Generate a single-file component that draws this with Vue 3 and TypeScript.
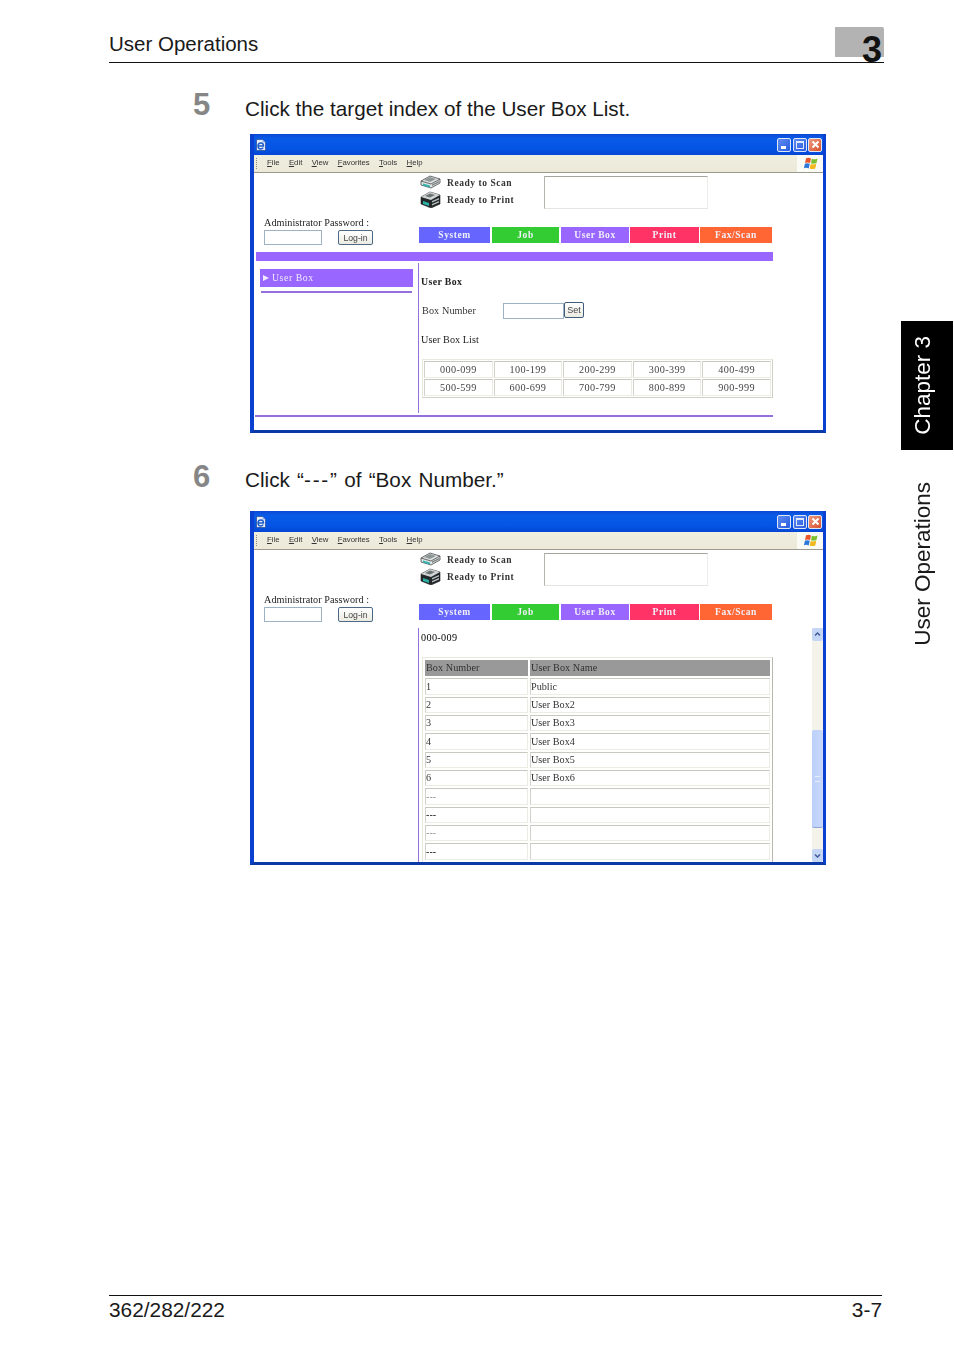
<script setup lang="ts">
interface Step {
  no: string
  kind: 'list' | 'boxes'
}
const steps: Step[] = [
  { no: '5', kind: 'list' },
  { no: '6', kind: 'boxes' },
]
const menu = [
  { key: 'F', rest: 'ile' },
  { key: 'E', rest: 'dit' },
  { key: 'V', rest: 'iew' },
  { key: 'F', rest: 'avorites' },
  { key: 'T', rest: 'ools' },
  { key: 'H', rest: 'elp' },
]
const tabs = [
  { label: 'System', cls: 't-system' },
  { label: 'Job', cls: 't-job' },
  { label: 'User Box', cls: 't-box' },
  { label: 'Print', cls: 't-print' },
  { label: 'Fax/Scan', cls: 't-fax' },
]
const ranges = [
  ['000-099', '100-199', '200-299', '300-399', '400-499'],
  ['500-599', '600-699', '700-799', '800-899', '900-999'],
]
const boxes = [
  ['1', 'Public'],
  ['2', 'User Box2'],
  ['3', 'User Box3'],
  ['4', 'User Box4'],
  ['5', 'User Box5'],
  ['6', 'User Box6'],
  ['---', ''],
  ['---', ''],
  ['---', ''],
  ['---', ''],
]
</script>

<template>
  <div class="page">
    <header class="head">
      <span>User Operations</span>
      <div class="chap"><span class="chap-no">3</span></div>
    </header>

    <section v-for="s in steps" :key="s.no" class="step" :class="'step-' + s.kind">
      <div class="step-row">
        <span class="step-no">{{ s.no }}</span>
        <span v-if="s.kind === 'list'" class="step-text">Click the target index of the User Box List.</span>
        <span v-else class="step-text spaced">Click “<span class="dashes">---</span>” of “Box Number.”</span>
      </div>
      <div class="win" :class="'win-' + s.kind">
        <div class="title">
          <svg class="ie" viewBox="0 0 11 12" width="11" height="12">
            <path d="M1.500 .5h6l3 3v8h-9z" fill="#e6eefb" stroke="#16357e" stroke-width=".6" />
            <path d="M7.500 .5v3h3z" fill="#9db7e6" />
            <path d="M3 7h5.500c0-2-1-3-2.500-3S3 5.200 3 7s1.200 3 2.800 3c1 0 1.900-.5 2.400-1.300" fill="none" stroke="#1a5cc8" stroke-width="1.400" />
          </svg>
          <div class="ctl">
            <span class="btn"><i class="min"></i></span>
            <span class="btn"><i class="max"></i></span>
            <span class="btn close">
              <svg viewBox="0 0 13 13" width="13" height="13"><path d="M3.500 3.500l6 6M9.500 3.500l-6 6" stroke="#fff" stroke-width="2" /></svg>
            </span>
          </div>
        </div>
        <div class="menubar">
          <i class="grip"></i>
          <div class="menu">
            <span v-for="(m, i) in menu" :key="i" class="mi"><u>{{ m.key }}</u>{{ m.rest }}</span>
          </div>
          <div class="flag">
            <svg viewBox="0 0 14 13" width="14" height="13">
              <path d="M2 1.500C3.500 .6 5 .6 7 1.500L6 6C4.200 5.200 2.700 5.200 1 6z" fill="#e8552a" />
              <path d="M7.800 1.800C9.500 2.500 11 2.400 13.500 1.400L12.500 6C10.500 6.900 8.700 7 7 6.300z" fill="#7cc030" />
              <path d="M.9 6.800C2.500 6 3.900 6 5.800 6.800L4.700 11.400C3 10.600 1.500 10.600-.1 11.400z" fill="#2b78d8" />
              <path d="M6.800 7.100C8.500 7.800 10.300 7.700 12.300 6.800L11.300 11.400C9.300 12.300 7.500 12.300 5.700 11.600z" fill="#f2b81e" />
            </svg>
          </div>
        </div>

        <div class="body">
          <div class="top">
            <div class="admin">
              <div class="admin-label">Administrator Password :</div>
              <div class="admin-row">
                <span class="field f-pass"></span>
                <span class="push p-login">Log-in</span>
              </div>
            </div>
            <div class="top-right">
              <div class="status-row">
                <div class="status">
                  <div class="st">
                    <svg class="dev" viewBox="0 0 21 15" width="21" height="15">
                      <path d="M1 6l9-5 10 3v4l-9 5-10-3z" fill="#dfe3e3" stroke="#333" stroke-width=".7" />
                      <path d="M1 6l10 3 9-5" fill="none" stroke="#333" stroke-width=".7" />
                      <path d="M4 5l6-3 6 2-6 3z" fill="#8f9696" />
                      <path d="M3 8.500l7 2v2l-7-2z" fill="#2fb4ae" />
                      <path d="M12 9.500l7-3.500v1.500l-7 3.500z" fill="#7b8282" />
                    </svg>
                    <span>Ready to Scan</span>
                  </div>
                  <div class="st">
                    <svg class="dev" viewBox="0 0 21 17" width="21" height="17">
                      <path d="M1 6l9-5 10 3v9l-9 4-10-4z" fill="#23282a" stroke="#222" stroke-width=".6" />
                      <path d="M1 6l10 3 9-5-10-3z" fill="#d0d4d4" />
                      <path d="M5 5l5-2.500 5 1.500-5 2.500z" fill="#6c7373" />
                      <path d="M3 10l6 2v3l-6-2z" fill="#2bb0a6" />
                      <path d="M12 10l7-3v1.500l-7 3zM12 13l7-3v1.500l-7 3z" fill="#b8bebe" />
                    </svg>
                    <span>Ready to Print</span>
                  </div>
                </div>
                <div class="msgbox"></div>
              </div>
              <nav class="tabs">
                <span v-for="t in tabs" :key="t.label" class="tab" :class="t.cls">{{ t.label }}</span>
              </nav>
            </div>
          </div>

          <template v-if="s.kind === 'list'">
            <div class="bar"></div>
            <div class="main">
              <aside class="side">
                <div class="sel"><i class="tri"></i>User Box</div>
                <div class="sel-line"></div>
              </aside>
              <div class="pane">
                <div class="pane-title">User Box</div>
                <div class="num-row">
                  <span class="num-label">Box Number</span>
                  <span class="field f-num"></span>
                  <span class="push p-set">Set</span>
                </div>
                <div class="list-title">User Box List</div>
                <table class="grid grid-ranges">
                  <tbody>
                    <tr v-for="(r, i) in ranges" :key="i">
                      <td v-for="c in r" :key="c">{{ c }}</td>
                    </tr>
                  </tbody>
                </table>
              </div>
            </div>
            <div class="foot-line"></div>
          </template>

          <div v-else class="main main-boxes">
            <aside class="side"></aside>
            <div class="pane pane-boxes">
              <div class="range-title">000-009</div>
              <table class="grid grid-boxes">
                <thead>
                  <tr><th class="c1">Box Number</th><th class="c2">User Box Name</th></tr>
                </thead>
                <tbody>
                  <tr v-for="(b, i) in boxes" :key="i">
                    <td class="c1" :class="{ dash: b[0] === '---', faint: b[0] === '---' && i % 2 === 0 }">{{ b[0] }}</td>
                    <td class="c2">{{ b[1] }}</td>
                  </tr>
                </tbody>
              </table>
            </div>
            <div class="scroll">
              <span class="arrow">
                <svg viewBox="0 0 9 9" width="9" height="9"><path d="M2 5.500l2.500-2.500 2.500 2.500" fill="none" stroke="#3d5a98" stroke-width="1.400" /></svg>
              </span>
              <div class="track">
                <div class="thumb"><i></i></div>
              </div>
              <span class="arrow">
                <svg viewBox="0 0 9 9" width="9" height="9"><path d="M2 3.500l2.500 2.500 2.500-2.500" fill="none" stroke="#3d5a98" stroke-width="1.400" /></svg>
              </span>
            </div>
          </div>
        </div>
      </div>
    </section>

    <footer class="foot">
      <span>362/282/222</span>
      <span>3-7</span>
    </footer>

    <aside class="tab-chapter"><span>Chapter 3</span></aside>
    <aside class="tab-section"><span>User Operations</span></aside>
  </div>
</template>

<style>
html, body { margin: 0; background: #fff; }
</style>

<style scoped>
.page {
  position: relative;
  width: 954px;
  height: 1352px;
  display: flex;
  flex-direction: column;
  overflow: hidden;
  background: #fff;
  color: #1a1a1a;
  font-family: "Liberation Sans", Arial, sans-serif;
  font-size: 20.500px;
  line-height: 24px;
}
.head {
  position: relative;
  margin: 32px 70px 0 109px;
  padding-bottom: 6px;
  border-bottom: 1px solid #111;
}
.chap {
  position: absolute;
  right: 0;
  top: -5px;
  width: 49px;
  height: 30px;
  background: #b3b3b3;
  border-top-right-radius: 2px;
}
.chap-no {
  position: absolute;
  right: 2px;
  top: 10px;
  font-size: 36px;
  line-height: 26px;
  font-weight: 700;
  color: #111;
}
.step { margin-left: 193px; }
.step-list { margin-top: 27px; }
.step-boxes { margin-top: 28px; }
.step-row { display: flex; }
.step-no {
  width: 52px;
  font-size: 31px;
  line-height: 30px;
  font-weight: 700;
  color: #868686;
}
.step-boxes .step-no { padding-top: 1px; }
.step-text { padding-top: 7px; font-size: 20.700px; }
.spaced { word-spacing: 1.500px; }
.dashes { letter-spacing: 1.800px; }
.win {
  box-sizing: border-box;
  width: 576px;
  margin-left: 57px;
  display: flex;
  flex-direction: column;
  border: solid #0a40d0;
  border-width: 0 3px 3px 4px;
  border-bottom-color: #0b3aa8;
  background: #fff;
  filter: blur(0.35px);
  font-family: "Liberation Serif", "Times New Roman", serif;
  font-size: 10.200px;
  line-height: 12px;
  overflow: hidden;
}
.win-list { height: 299px; margin-top: 13px; }
.win-boxes { height: 354px; margin-top: 19px; }
.title {
  height: 21px;
  margin: 0 -3px 0 -4px;
  padding: 0 4px 0 5px;
  display: flex;
  align-items: center;
  justify-content: space-between;
  background: linear-gradient(#0a48d2, #0a5ae8 20%, #0555e4 70%, #0446d4);
}
.ctl { display: flex; gap: 1.500px; }
.btn {
  box-sizing: border-box;
  width: 14px;
  height: 14px;
  border: 1px solid #dfe6f8;
  border-radius: 2px;
  background: linear-gradient(135deg, #5f8cf0, #2a5ce0);
  position: relative;
  display: block;
}
.btn .min {
  position: absolute;
  left: 3px;
  bottom: 2px;
  width: 5px;
  height: 3px;
  background: #fff;
}
.btn .max {
  position: absolute;
  inset: 2px;
  border: 1px solid #dfe8fb;
  border-top-width: 2px;
}
.btn.close { background: linear-gradient(135deg, #ee9a7e, #d6512c); }
.btn.close svg { display: block; margin: -0.500px; }
.menubar {
  box-sizing: border-box;
  height: 18px;
  display: flex;
  align-items: center;
  background: linear-gradient(#f0eee0, #ece9d8);
  border-bottom: 1.500px solid #9a9a90;
  padding-left: 2px;
}
.grip {
  width: 0;
  height: 11px;
  border-left: 1px dotted #8a8a80;
}
.menu {
  display: flex;
  margin: -2px 0 0 10px;
  font-family: "Liberation Sans", Arial, sans-serif;
  font-size: 7.800px;
  color: #333;
  gap: 9.300px;
  flex: 1;
}
.mi u { text-underline-offset: 1px; }
.flag {
  box-sizing: border-box;
  width: 26px;
  height: 17px;
  padding-left: 2px;
  background: #fbfbf6;
  display: flex;
  align-items: center;
  justify-content: center;
}
.body { flex: 1; display: flex; flex-direction: column; min-height: 0; }
.top { display: flex; height: 71px; }
.admin {
  box-sizing: border-box;
  width: 165px;
  padding: 43px 0 0 10px;
}
.admin-label { line-height: 14px; letter-spacing: 0.040px; white-space: nowrap; color: #222; }
.admin-row { display: flex; gap: 16px; }
.field {
  box-sizing: border-box;
  display: block;
  border: 1px solid #9fb2c4;
  background: #fff;
}
.f-pass { width: 58px; height: 15px; }
.push {
  box-sizing: border-box;
  display: flex;
  align-items: center;
  justify-content: center;
  border: 1px solid #4d6a85;
  border-radius: 2px;
  background: linear-gradient(#fff, #ecebe2);
  font-family: "Liberation Sans", Arial, sans-serif;
  font-size: 8.700px;
  color: #444;
}
.p-login { width: 35px; height: 15px; }
.top-right { flex: 1; }
.status-row { display: flex; padding-top: 1px; }
.status { box-sizing: border-box; width: 125px; padding-left: 1px; }
.st {
  display: flex;
  align-items: center;
  height: 17px;
  font-weight: 700;
  font-size: 9.500px;
  letter-spacing: 0.550px;
  color: #333;
  white-space: nowrap;
}
.dev { flex: none; margin-right: 6px; }
.msgbox {
  box-sizing: border-box;
  width: 164px;
  height: 33px;
  margin-top: 2px;
  border: 1px solid;
  border-color: #a5a5a0 #ededea #e4e4e0 #b5b5b0;
}
.tabs { display: flex; margin-top: 18px; }
.tab {
  height: 16px;
  display: flex;
  align-items: center;
  justify-content: center;
  color: #f0f0fa;
  font-weight: 700;
  font-size: 9.500px;
  letter-spacing: 0.550px;
  white-space: nowrap;
  margin-right: 1px;
}
.t-system { width: 71px; background: #6666ff; margin-right: 2px; }
.t-job { width: 67px; background: #33cc33; margin-right: 2px; }
.t-box { width: 68px; background: #9966ff; }
.t-print { width: 69px; background: #ff3366; }
.t-fax { width: 72px; background: #ff6633; margin-right: 0; }
.bar {
  height: 9px;
  width: 517px;
  margin: 8px 0 0 2px;
  background: #9966ff;
}
.main { display: flex; margin-top: 2px; height: 150px; }
.main-boxes { margin-top: 7px; height: auto; flex: 1; min-height: 0; overflow: hidden; }
.side { box-sizing: border-box; width: 164px; flex: none; padding: 6px 0 0 6px; }
.sel {
  width: 153px;
  height: 18px;
  display: flex;
  align-items: center;
  background: #9966ff;
  color: #f1eaff;
  font-size: 9.800px;
  letter-spacing: 0.550px;
}
.tri {
  width: 0;
  height: 0;
  margin: 0 3px;
  border-left: 6px solid #f1eaff;
  border-top: 3px solid transparent;
  border-bottom: 3px solid transparent;
}
.sel-line {
  width: 151px;
  height: 2px;
  margin: 4px 0 0 1px;
  background: #9370db;
}
.pane {
  box-sizing: border-box;
  flex: 1;
  border-left: 1.500px solid #9370db;
  padding-left: 2px;
}
.pane-title { margin-top: 13px; font-weight: 700; font-size: 9.800px; letter-spacing: 0.400px; color: #222; }
.num-row { display: flex; align-items: flex-start; margin-top: 15px; height: 16px; }
.num-label { width: 82px; padding: 2px 0 0 1px; box-sizing: border-box; letter-spacing: 0.100px; color: #333; }
.f-num { width: 61px; height: 16px; }
.p-set { width: 20px; height: 16px; margin-top: -1px; font-size: 9px; border-color: #3f5c7a; }
.list-title { margin-top: 15px; letter-spacing: 0.050px; }
.grid { border-collapse: separate; border-spacing: 2px; }
.grid td, .grid th {
  box-sizing: border-box;
  border: 1px solid;
  border-color: #c8c8be #ecece4 #ecece4 #d2d2c8;
  padding: 0;
  font-weight: 400;
}
.grid-ranges {
  width: 351px;
  margin: 13px 0 0 1px;
  border-spacing: 1.500px;
  border: 1px solid;
  border-color: #e8e8df #d0d0c6 #d0d0c6 #e8e8df;
  table-layout: fixed;
  color: #444;
}
.grid-ranges td {
  height: 17px;
  text-align: center;
  letter-spacing: 0.400px;
}
.foot-line {
  width: 518px;
  height: 2px;
  margin: 2px 0 0 1px;
  background: #9370db;
}
.pane-boxes { overflow: hidden; }
.range-title { margin-top: 4px; letter-spacing: 0.350px; font-size: 10.200px; color: #000; }
.grid-boxes {
  width: 351px;
  margin: 13px 0 0 1px;
  table-layout: fixed;
  border: 1px solid;
  border-color: #e8e8df #b8b8ad #b8b8ad #e8e8df;
  color: #333;
}
.grid-boxes .c1 { width: 103px; }
.grid-boxes th, .grid-boxes td {
  height: 16.350px;
  text-align: left;
  padding-left: 0;
  white-space: nowrap;
}
.grid-boxes th {
  background: #999;
  border-color: #999;
  letter-spacing: 0.050px;
  color: #333;
}
.dash { color: #222; font-weight: 700; font-family: "Liberation Sans", Arial, sans-serif; }
.faint { color: #999; font-weight: 400; }
.scroll {
  width: 11px;
  flex: none;
  display: flex;
  flex-direction: column;
  background: #f4f3ea;
}
.arrow {
  height: 13px;
  flex: none;
  display: flex;
  align-items: center;
  justify-content: center;
  background: #c5d5f5;
  border-radius: 2px;
}
.track { flex: 1; padding-top: 89px; }
.thumb {
  height: 97px;
  background: linear-gradient(90deg, #bcd0fa, #c8d8fb);
  border-bottom: 1px solid #8ea6d8;
  border-radius: 2px;
  display: flex;
  align-items: center;
  justify-content: center;
}
.thumb i { width: 5px; height: 4px; border-top: 1px solid #e8eefc; border-bottom: 1px solid #e8eefc; }
.foot {
  margin: auto 72px 30px 109px;
  padding-top: 2px;
  border-top: 1px solid #111;
  display: flex;
  justify-content: space-between;
  font-size: 20.850px;
}
.tab-chapter, .tab-section {
  position: absolute;
  writing-mode: vertical-rl;
  display: flex;
  align-items: center;
  justify-content: center;
  font-size: 22.500px;
}
.tab-chapter span, .tab-section span { transform: rotate(180deg); }
.tab-chapter {
  box-sizing: border-box;
  left: 901px;
  top: 321px;
  width: 52px;
  height: 129px;
  padding-right: 8px;
  background: #000;
  color: #fff;
}
.tab-section {
  left: 901px;
  top: 482px;
  width: 44px;
  height: 164px;
  color: #1a1a1a;
}
</style>
